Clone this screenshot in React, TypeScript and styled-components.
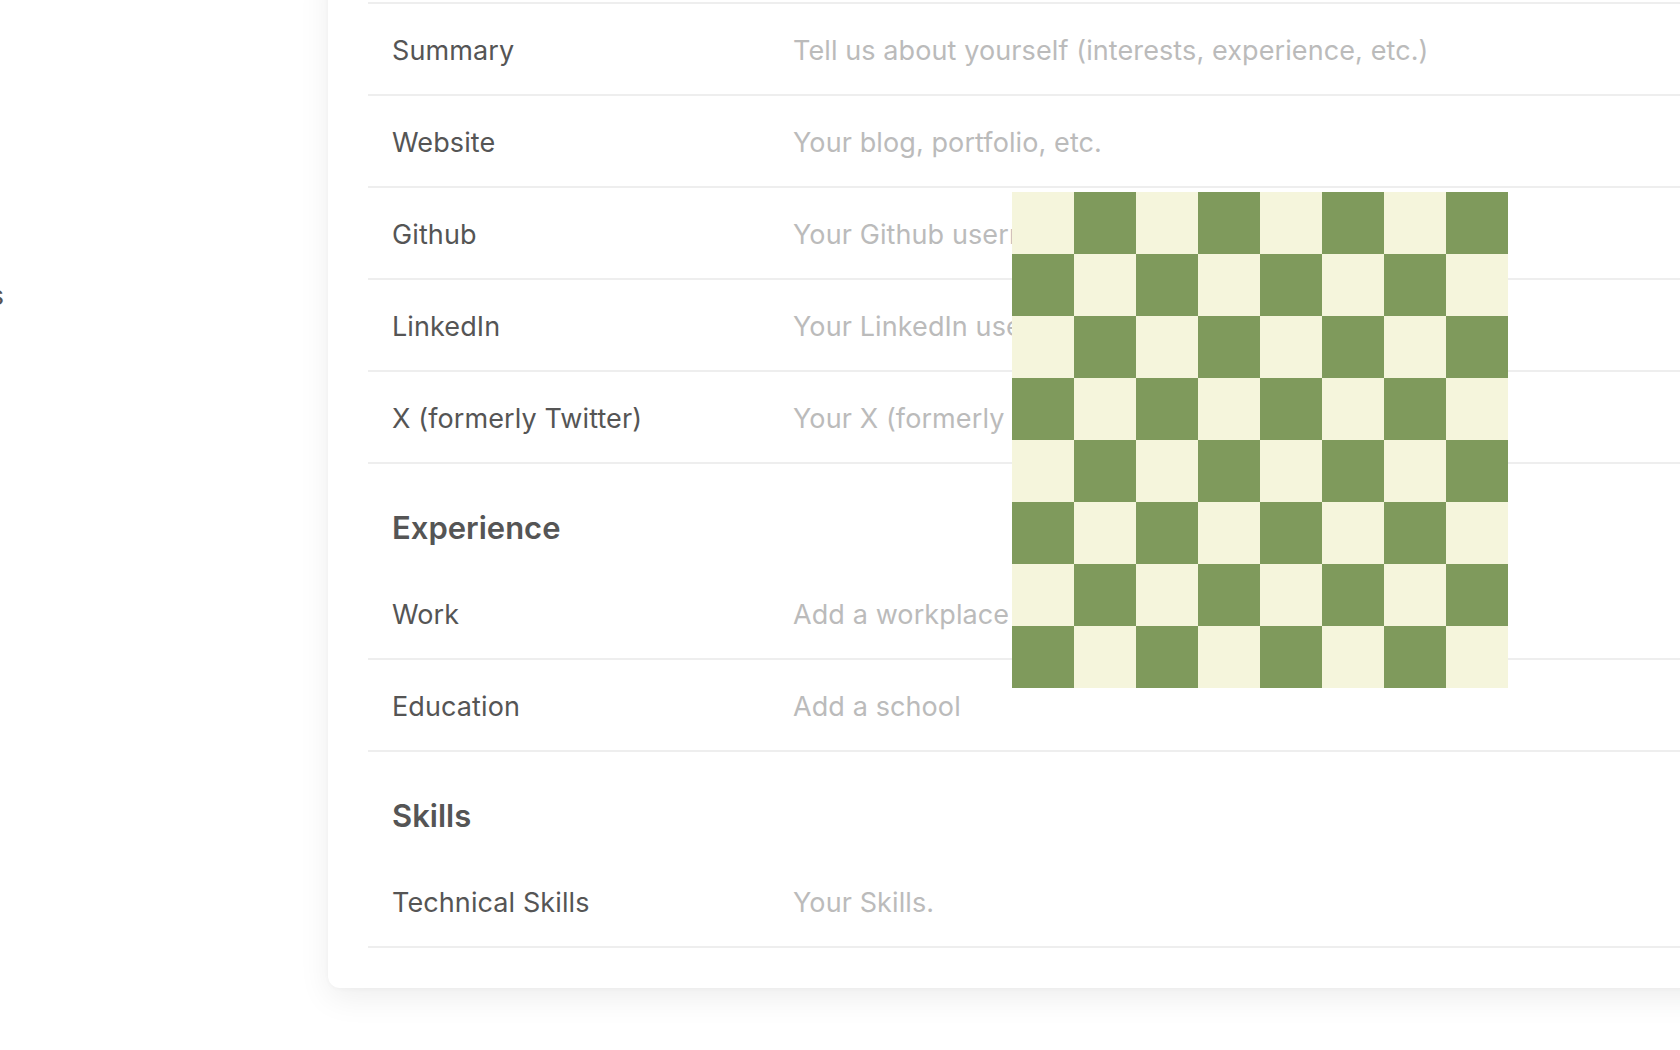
import React from "react";
import styled, { createGlobalStyle } from "styled-components";

const Global = createGlobalStyle`
  html, body {
    margin: 0;
    padding: 0;
    background: #ffffff;
    overflow: hidden;
  }
  body {
    font-family: Inter, "Noto Sans", "Liberation Sans", sans-serif;
    -webkit-font-smoothing: antialiased;
  }
`;

const Viewport = styled.div`
  position: relative;
  width: 1680px;
  height: 1050px;
  overflow: hidden;
  background: #ffffff;
`;

/* the page is scrolled: these margins are the scroll offsets */
const Layout = styled.div`
  display: flex;
  align-items: flex-start;
  gap: 324px;
  margin-left: -200px;
  margin-top: -38px;
`;

const Sidebar = styled.nav`
  flex: 0 0 204px;
  display: flex;
  flex-direction: column;
  align-items: flex-end;
  padding-top: 314px;
`;

const NavItem = styled.a`
  display: block;
  height: 40px;
  line-height: 40px;
  font-size: 27px;
  color: #555555;
  text-decoration: none;
  white-space: nowrap;
`;

const Card = styled.section`
  flex: 0 0 1420px;
  box-sizing: border-box;
  background: #ffffff;
  border-radius: 12px;
  box-shadow: 0 10px 32px rgba(0, 0, 0, 0.07), 0 1px 4px rgba(0, 0, 0, 0.03);
  padding: 40px;
`;

const Row = styled.div`
  display: grid;
  grid-template-columns: 401px 1fr;
  align-items: center;
  height: 88px;
  padding: 2px 24px 0;
  border-bottom: 2px solid #eeeeee;

  &:first-child {
    border-top: 2px solid #eeeeee;
  }
`;

const Label = styled.span`
  font-size: 27px;
  letter-spacing: 0.1px;
  color: #555555;
  white-space: nowrap;
`;

const Value = styled.span<{ $empty?: boolean }>`
  font-size: 27px;
  letter-spacing: 0.1px;
  color: ${(p) => (p.$empty ? "#bbbbbb" : "#555555")};
  white-space: nowrap;
`;

const Heading = styled.h2`
  box-sizing: border-box;
  margin: 0;
  height: 104px;
  padding: 46px 24px 0;
  font-size: 31px;
  line-height: 36px;
  font-weight: 600;
  color: #555555;
`;

const Checkerboard = styled.div`
  position: absolute;
  left: 1012px;
  top: 192px;
  width: 496px;
  height: 496px;
  background: repeating-conic-gradient(#7f9a5c 0 25%, #f5f5dc 0 50%) 0 0 / 124px 124px;
`;

const profile = [
  ["Summary", "Tell us about yourself (interests, experience, etc.)"],
  ["Website", "Your blog, portfolio, etc."],
  ["Github", "Your Github username or url"],
  ["LinkedIn", "Your LinkedIn username or url"],
  ["X (formerly Twitter)", "Your X (formerly Twitter) username or url"],
];

const experience = [
  ["Work", "Add a workplace"],
  ["Education", "Add a school"],
];

const skills = [["Technical Skills", "Your Skills."]];

function Field({ label, placeholder }: { label: string; placeholder: string }) {
  return (
    <Row>
      <Label>{label}</Label>
      <Value $empty>{placeholder}</Value>
    </Row>
  );
}

export default function App() {
  return (
    <Viewport>
      <Global />
      <Layout>
        <Sidebar>
          <NavItem href="#">Settings</NavItem>
        </Sidebar>
        <Card>
          {profile.map(([l, p]) => (
            <Field key={l} label={l} placeholder={p} />
          ))}
          <Heading>Experience</Heading>
          {experience.map(([l, p]) => (
            <Field key={l} label={l} placeholder={p} />
          ))}
          <Heading>Skills</Heading>
          {skills.map(([l, p]) => (
            <Field key={l} label={l} placeholder={p} />
          ))}
        </Card>
      </Layout>
      <Checkerboard />
    </Viewport>
  );
}
